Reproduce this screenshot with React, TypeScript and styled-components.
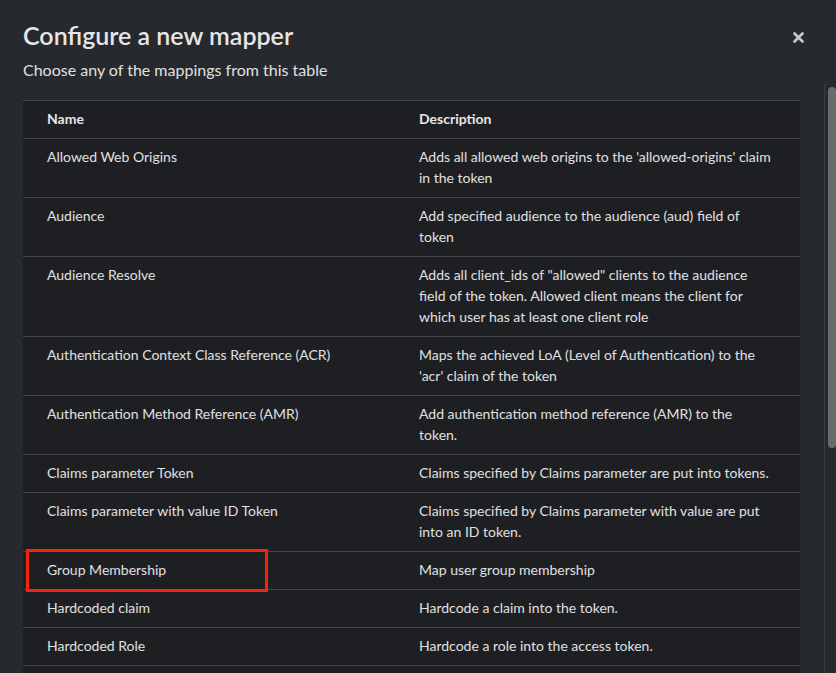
import React from "react";
import styled, { createGlobalStyle } from "styled-components";

const GlobalStyle = createGlobalStyle`
  html, body {
    margin: 0;
    padding: 0;
    background: #26292d;
    overflow: hidden;
  }
  *, *::before, *::after { box-sizing: border-box; }
`;

const Modal = styled.div`
  width: 836px;
  height: 673px;
  display: flex;
  flex-direction: column;
  background: #26292d;
  color: #e0e0e0;
  font-family: Lato, "Liberation Sans", sans-serif;
`;

const Header = styled.header`
  display: flex;
  align-items: flex-start;
  justify-content: space-between;
  padding: 20px 27px 0 23px;
`;

const HeaderText = styled.div`
  display: flex;
  flex-direction: column;
  gap: 8px;
`;

const Title = styled.h1`
  margin: 0;
  font-size: 25px;
  font-weight: 600;
  line-height: 30px;
  color: #e6e6e6;
`;

const Subtitle = styled.p`
  margin: 0;
  font-size: 16px;
  line-height: 24px;
  color: #e0e0e0;
`;

const CloseButton = styled.button`
  width: 22px;
  height: 34px;
  padding: 0;
  border: 0;
  background: transparent;
  color: #c9c9c9;
  display: flex;
  align-items: center;
  justify-content: center;
  cursor: pointer;
`;

const BodyFrame = styled.div`
  position: relative;
  flex: 1;
  min-height: 0;
  margin-top: 2px;
`;

const Body = styled.div`
  height: 100%;
  overflow-y: auto;
  padding: 16px 36px 24px 23px;
  scrollbar-width: none;
  &::-webkit-scrollbar {
    display: none;
  }
`;

const ScrollRail = styled.div`
  position: absolute;
  top: 0;
  right: 0;
  bottom: 0;
  width: 12px;
  background: #27292d;
  border-left: 1px solid #3c3e42;
  padding: 3px 0 0 3px;
`;

const ScrollThumb = styled.div`
  width: 8px;
  border-radius: 4px;
  background: #6b6b6b;
`;

const Table = styled.table`
  width: 777px;
  border-collapse: collapse;
  background: #1e1f23;
  font-size: 14px;
  line-height: 21px;
  table-layout: fixed;
`;

const HeadRow = styled.tr`
  border-top: 1px solid #45474b;
  border-bottom: 1px solid #45474b;
`;

const HeadCell = styled.th<{ $w?: number }>`
  text-align: left;
  padding: 7px 24px 9px;
  font-weight: 700;
  color: #e6e6e6;
  width: ${(p) => (p.$w ? `${p.$w}px` : "auto")};
`;

const Row = styled.tr`
  border-bottom: 1px solid #45474b;
`;

const Cell = styled.td<{ $marked?: boolean }>`
  position: relative;
  vertical-align: top;
  padding: 7px 24px 9px;
  color: #e0e0e0;

  ${(p) =>
    p.$marked &&
    `
    &::after {
      content: "";
      position: absolute;
      left: 3px;
      top: -3px;
      width: 242px;
      height: 43px;
      border: 3px solid #f4250f;
      pointer-events: none;
    }
  `}
`;

const Line = styled.span`
  display: block;
  white-space: nowrap;
`;

const WrapText = styled.span`
  display: block;
`;

type Mapper = { name: string; lines?: string[]; text?: string };

const mappers: Mapper[] = [
  {
    name: "Allowed Web Origins",
    lines: ["Adds all allowed web origins to the 'allowed-origins' claim", "in the token"],
  },
  { name: "Audience", lines: ["Add specified audience to the audience (aud) field of", "token"] },
  {
    name: "Audience Resolve",
    lines: [
      'Adds all client_ids of "allowed" clients to the audience',
      "field of the token. Allowed client means the client for",
      "which user has at least one client role",
    ],
  },
  {
    name: "Authentication Context Class Reference (ACR)",
    lines: ["Maps the achieved LoA (Level of Authentication) to the", "'acr' claim of the token"],
  },
  {
    name: "Authentication Method Reference (AMR)",
    lines: ["Add authentication method reference (AMR) to the", "token."],
  },
  { name: "Claims parameter Token", lines: ["Claims specified by Claims parameter are put into tokens."] },
  {
    name: "Claims parameter with value ID Token",
    lines: ["Claims specified by Claims parameter with value are put", "into an ID token."],
  },
  { name: "Group Membership", lines: ["Map user group membership"] },
  { name: "Hardcoded claim", lines: ["Hardcode a claim into the token."] },
  { name: "Hardcoded Role", lines: ["Hardcode a role into the access token."] },
  {
    name: "Pairwise subject identifier using salted sha-256",
    text: "Calculates a pairwise subject identifier using a salted sha-256 hash. See OpenID Connect specification for more info about pairwise subject identifiers.",
  },
  { name: "Role Name Mapper", text: "Map an assigned role to a new name or position in the token." },
  {
    name: "User Address",
    text: "Maps user address attributes (street, locality, region, postal_code, and country) to the OpenID Connect 'address' claim.",
  },
  { name: "User Attribute", text: "Map a custom user attribute to a token claim." },
  { name: "User Property", text: "Map a built in user property (email, firstName, lastName) to a token claim." },
  { name: "User Realm Role", text: "Map a user realm role to a token claim." },
];

const CloseIcon = () => (
  <svg width="11" height="11" viewBox="0 0 11 11" aria-hidden="true">
    <path
      d="M1.5 1.5 L9.5 9.5 M9.5 1.5 L1.5 9.5"
      stroke="currentColor"
      strokeWidth="2.6"
      strokeLinecap="round"
      fill="none"
    />
  </svg>
);

export default function App() {
  return (
    <>
      <GlobalStyle />
      <Modal>
        <Header>
          <HeaderText>
            <Title>Configure a new mapper</Title>
            <Subtitle>Choose any of the mappings from this table</Subtitle>
          </HeaderText>
          <CloseButton aria-label="Close">
            <CloseIcon />
          </CloseButton>
        </Header>
        <BodyFrame>
          <Body>
            <Table>
              <thead>
                <HeadRow>
                  <HeadCell $w={372}>Name</HeadCell>
                  <HeadCell>Description</HeadCell>
                </HeadRow>
              </thead>
              <tbody>
                {mappers.map((m) => (
                  <Row key={m.name}>
                    <Cell $marked={m.name === "Group Membership"}>{m.name}</Cell>
                    <Cell>
                      {m.lines ? (
                        m.lines.map((l) => <Line key={l}>{l}</Line>)
                      ) : (
                        <WrapText>{m.text}</WrapText>
                      )}
                    </Cell>
                  </Row>
                ))}
              </tbody>
            </Table>
          </Body>
          <ScrollRail aria-hidden="true">
            <ScrollThumb style={{ height: 361 }} />
          </ScrollRail>
        </BodyFrame>
      </Modal>
    </>
  );
}
